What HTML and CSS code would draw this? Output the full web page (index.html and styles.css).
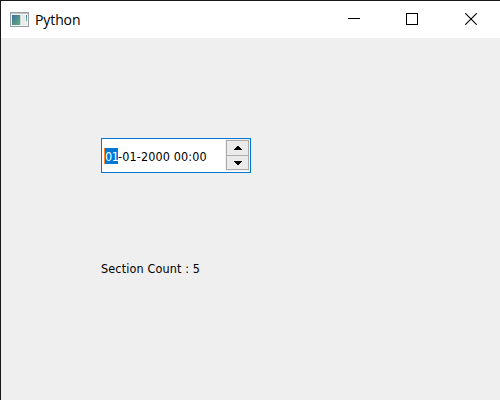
FILE: index.html
```html
<!DOCTYPE html>
<html lang="en">
<head>
<meta charset="utf-8">
<title>Python</title>
<link rel="stylesheet" href="styles.css">
</head>
<body>
<div class="window">
  <header class="titlebar">
    <svg class="app-icon" width="20" height="16" viewBox="0 0 20 16" shape-rendering="crispEdges">
      <defs>
        <linearGradient id="pane" x1="0" y1="0" x2="1" y2="1"><stop offset="0" stop-color="#3f70a0"/><stop offset="1" stop-color="#5fb07c"/></linearGradient>
      </defs>
      <rect x=".5" y=".5" width="18" height="14" fill="#f2f3f4" stroke="#9a9fa3"/>
      <rect x="1" y="1" width="17" height="1" fill="#c3c7ca"/>
      <rect x="2" y="3" width="8" height="10" fill="url(#pane)"/>
      <rect x="10" y="3" width="1" height="10" fill="#c9d6d8"/>
      <rect x="12" y="3" width="3" height="10" fill="#e9eaeb"/>
      <rect x="16" y="3" width="1" height="3" fill="#4f83aa"/>
      <rect x="16" y="6" width="1" height="3" fill="#67af94"/>
      <rect x="16" y="9" width="1" height="4" fill="#dfe8e2"/>
    </svg>
    <span class="title">Python</span>
    <div class="controls">
      <svg width="12" height="12" shape-rendering="crispEdges"><path d="M0 5.5H12" stroke="#000"/></svg>
      <svg width="12" height="12" shape-rendering="crispEdges"><rect x=".5" y=".5" width="11" height="11" fill="none" stroke="#000"/></svg>
      <svg class="close" width="12" height="12"><path d="M.2 .2L11.8 11.8M11.8 .2L.2 11.8" stroke="#000" stroke-width="1.1"/></svg>
    </div>
  </header>
  <main class="content">
    <div class="datetime">
      <div class="value"><span class="selected">01</span><span class="rest">-01-2000 00:00</span></div>
      <div class="spinner">
        <div class="step"><svg width="8" height="4" shape-rendering="crispEdges"><path d="M3 0h2v1h1v1h1v1h1v1H0V3h1V2h1V1h1z"/></svg></div>
        <div class="step"><svg width="8" height="4" shape-rendering="crispEdges"><path d="M0 0h8v1H7v1H6v1H5v1H3V3H2V2H1V1H0z"/></svg></div>
      </div>
    </div>
    <div class="label">Section Count : 5</div>
  </main>
</div>
</body>
</html>
```
FILE: styles.css
```css
* { box-sizing: border-box; }
body { margin: 0; }
.window {
  width: 500px;
  height: 400px;
  display: flex;
  flex-direction: column;
  overflow: hidden;
  background: #efefef;
  border-top: 1px solid #19171a;
  border-left: 1px solid #19171a;
}
.titlebar {
  height: 37px;
  flex: none;
  display: flex;
  align-items: center;
  padding: 0 23px 0 9px;
  background: #fff;
}
.app-icon { margin-right: 5px; }
.title {
  font: 14px/20px "Open Sans", "Noto Sans", sans-serif;
  letter-spacing: -0.1px;
  color: #000;
}
.controls { margin-left: auto; padding-bottom: 1px; display: flex; gap: 46px; }
.controls svg { display: block; }
.controls .close { margin-left: 1px; }
.content {
  padding: 100px 0 0 100px;
  font: 12.5px/16px "DejaVu Sans Condensed", "DejaVu Sans", sans-serif;
  font-stretch: condensed;
  letter-spacing: 0.13px;
  color: #000;
}
.datetime {
  width: 150px;
  height: 35px;
  display: flex;
  justify-content: space-between;
  background: #fff;
  border: 1px solid #0078d7;
}
.value { display: flex; padding: 9px 0 0 2px; white-space: nowrap; }
.selected {
  width: 14px;
  height: 16px;
  line-height: 18px;
  background: #0078d7;
  border-left: 1px solid #ff8728;
  color: #fff;
  letter-spacing: -0.4px;
}
.rest { line-height: 18px; }
.spinner {
  width: 25px;
  height: 32px;
  padding: 1px;
  background: #f0f0f0;
}
.step {
  height: 16px;
  display: flex;
  align-items: center;
  justify-content: center;
  background: #ebebeb;
  border: 1px solid #acacac;
}
.step + .step { height: 15px; margin-top: -1px; }
.label { margin-top: 88px; white-space: nowrap; }
```
